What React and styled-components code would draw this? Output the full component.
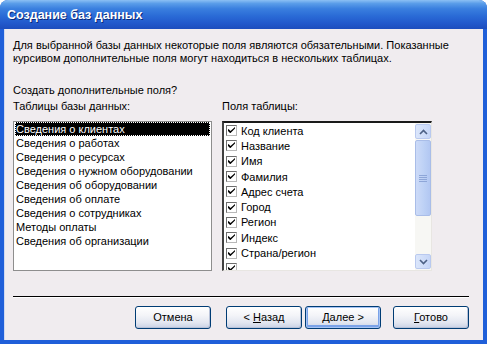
import styled, { createGlobalStyle } from "styled-components";

const GlobalStyle = createGlobalStyle`
  html, body {
    margin: 0;
    padding: 0;
    background: #ffffff;
  }
  body {
    font-family: "Liberation Sans", "DejaVu Sans", sans-serif;
    font-size: 11px;
    color: #000;
  }
`;

const Window = styled.div`
  width: 487px;
  height: 344px;
  display: flex;
  flex-direction: column;
  background: #1f5fd9;
  border-radius: 8px 8px 0 0;
  overflow: hidden;
  box-sizing: border-box;
`;

const TitleBar = styled.div`
  height: 29px;
  flex: none;
  display: flex;
  align-items: center;
  padding: 1px 0 0 7px;
  box-sizing: border-box;
  background: linear-gradient(
    to bottom,
    #8cc0f4 0%,
    #5a9de9 12%,
    #3a7fdf 30%,
    #2a6bd6 55%,
    #2259cc 80%,
    #1d4dbd 100%
  );
  color: #fff;
  font-family: "Liberation Sans", "DejaVu Sans", sans-serif;
  font-weight: bold;
  font-size: 12.5px;
  text-shadow: 1px 1px 0 #0b2a7a;
`;

const Body = styled.div`
  flex: 1;
  margin: 0 4px 4px 4px;
  background: #f0ecef;
  padding: 10px 14px 0 9px;
  display: flex;
  flex-direction: column;
  box-sizing: border-box;
  box-shadow: inset 1px 0 0 #cfd9f0;
`;

const Intro = styled.p`
  margin: 0;
  line-height: 13px;
`;

const Question = styled.p`
  margin: 19px 0 0 0;
  line-height: 13px;
`;

const Columns = styled.div`
  display: grid;
  grid-template-columns: 199px 210px;
  column-gap: 10px;
  margin-top: 3px;
`;

const Column = styled.div`
  display: flex;
  flex-direction: column;
`;

const Label = styled.div`
  line-height: 13px;
  height: 13px;
  margin-bottom: 8px;
`;

const ListBox = styled.div`
  height: 150px;
  box-sizing: border-box;
  background: #fff;
  border: 1px solid #8e8e8e;
  padding: 0 1px;
`;

const ListItem = styled.div`
  height: 14px;
  line-height: 14px;
  padding-left: 1px;
  white-space: nowrap;
  box-sizing: border-box;
  background: ${(p) => (p.$selected ? "#000" : "transparent")};
  color: ${(p) => (p.$selected ? "#fff" : "#000")};
  outline: ${(p) => (p.$selected ? "1px dotted #fff" : "none")};
  outline-offset: -1px;
`;

const CheckList = styled.div`
  height: 150px;
  box-sizing: border-box;
  background: #fff;
  border-top: 2px solid #1a1a1a;
  border-left: 2px solid #404040;
  border-right: 1px solid #e8e6e2;
  border-bottom: 1px solid #e8e6e2;
  display: flex;
  overflow: hidden;
`;

const CheckItems = styled.div`
  flex: 1;
  padding: 0 0 0 2px;
  overflow: hidden;
`;

const CheckRow = styled.div`
  height: 15.3px;
  display: flex;
  align-items: center;
  gap: 4px;
  white-space: nowrap;
`;

const Box = styled.span`
  width: 11px;
  height: 11px;
  flex: none;
  box-sizing: border-box;
  background: #fff;
  border-top: 1px solid #6e6e6e;
  border-left: 1px solid #6e6e6e;
  border-right: 1px solid #b8b8b8;
  border-bottom: 1px solid #b8b8b8;
  display: flex;
  align-items: center;
  justify-content: center;
`;

const ScrollBar = styled.div`
  width: 16px;
  flex: none;
  display: flex;
  flex-direction: column;
  background: #f7f7f4;
  padding: 1px 0;
  box-sizing: border-box;
`;

const Arrow = styled.div`
  height: 15px;
  box-sizing: border-box;
  border: 1px solid #b9c9ef;
  border-radius: 2px;
  background: linear-gradient(to right, #dbe6fb, #c6d6f7);
  display: flex;
  align-items: center;
  justify-content: center;
  flex: none;
`;

const Thumb = styled.div`
  height: 76px;
  margin-top: 1px;
  box-sizing: border-box;
  border: 1px solid #a9bde8;
  border-radius: 2px;
  background: linear-gradient(to right, #cddbf8, #bcd0f5 60%, #b2c7f2);
  display: flex;
  align-items: center;
  justify-content: center;
  flex: none;
`;

const Spacer = styled.div`
  flex: 1;
`;

const Separator = styled.div`
  margin-top: 25px;
  height: 1px;
  background: #000;
  box-shadow: 0 1px 0 #ffffff;
`;

const ButtonRow = styled.div`
  display: flex;
  justify-content: flex-end;
  margin-top: 9px;
`;

const Button = styled.div`
  width: 76px;
  height: 23px;
  box-sizing: border-box;
  margin-left: ${(p) => p.$gap}px;
  border: 1px solid #003c74;
  border-radius: 3px;
  background: linear-gradient(
    to bottom,
    #ffffff 0%,
    #f3f4f8 40%,
    #e2e6f0 75%,
    #c9d1e4 100%
  );
  box-shadow: ${(p) =>
    p.$focused
      ? "inset 0 0 0 1px #a6c4f4, inset 0 -1px 0 2px #7aa2e8"
      : "inset -1px -1px 0 #b8c2d8"};
  display: flex;
  align-items: center;
  justify-content: center;
  line-height: 13px;
  white-space: pre;
`;

const U = styled.span`
  text-decoration: underline;
`;

const tables = [
  "Сведения о клиентах",
  "Сведения о работах",
  "Сведения о ресурсах",
  "Сведения о нужном оборудовании",
  "Сведения об оборудовании",
  "Сведения об оплате",
  "Сведения о сотрудниках",
  "Методы оплаты",
  "Сведения об организации",
];

const fields = [
  "Код клиента",
  "Название",
  "Имя",
  "Фамилия",
  "Адрес счета",
  "Город",
  "Регион",
  "Индекс",
  "Страна/регион",
  "",
];

const Check = () => (
  <svg width="7" height="7" viewBox="0 0 7 7">
    <path d="M0 2 L0 4 L2 6 L2.5 6 L7 1.5 L7 0 L2.5 4 L1 2.5 Z" fill="#000" />
  </svg>
);

const Chevron = ({ up }) => (
  <svg width="9" height="6" viewBox="0 0 9 6">
    <path
      d={up ? "M1 5 L4.5 1.5 L8 5" : "M1 1 L4.5 4.5 L8 1"}
      stroke="#4d6185"
      strokeWidth="1.6"
      fill="none"
    />
  </svg>
);

const Grip = () => (
  <svg width="8" height="7" viewBox="0 0 8 7">
    <path d="M0 0.5 H8 M0 2.5 H8 M0 4.5 H8 M0 6.5 H8" stroke="#8ea6d8" strokeWidth="1" />
  </svg>
);

export default function App() {
  return (
    <>
      <GlobalStyle />
      <Window>
        <TitleBar>Создание баз данных</TitleBar>
        <Body>
          <Intro>
            Для выбранной базы данных некоторые поля являются обязательными. Показанные
            <br />
            курсивом дополнительные поля могут находиться в нескольких таблицах.
          </Intro>
          <Question>Создать дополнительные поля?</Question>
          <Columns>
            <Column>
              <Label>Таблицы базы данных:</Label>
              <ListBox>
                {tables.map((t, i) => (
                  <ListItem key={t} $selected={i === 0}>
                    {t}
                  </ListItem>
                ))}
              </ListBox>
            </Column>
            <Column>
              <Label>Поля таблицы:</Label>
              <CheckList>
                <CheckItems>
                  {fields.map((f, i) => (
                    <CheckRow key={i}>
                      <Box>
                        <Check />
                      </Box>
                      {f}
                    </CheckRow>
                  ))}
                </CheckItems>
                <ScrollBar>
                  <Arrow>
                    <Chevron up />
                  </Arrow>
                  <Thumb>
                    <Grip />
                  </Thumb>
                  <Spacer />
                  <Arrow>
                    <Chevron />
                  </Arrow>
                </ScrollBar>
              </CheckList>
            </Column>
          </Columns>
          <Separator />
          <ButtonRow>
            <Button $gap={0}>Отмена</Button>
            <Button $gap={15}>
              <span>
                {"< "}
                <U>Н</U>азад
              </span>
            </Button>
            <Button $gap={3} $focused>
              <span>
                <U>Д</U>
                {"алее >"}
              </span>
            </Button>
            <Button $gap={12}>
              <span>
                <U>Г</U>отово
              </span>
            </Button>
          </ButtonRow>
        </Body>
      </Window>
    </>
  );
}
